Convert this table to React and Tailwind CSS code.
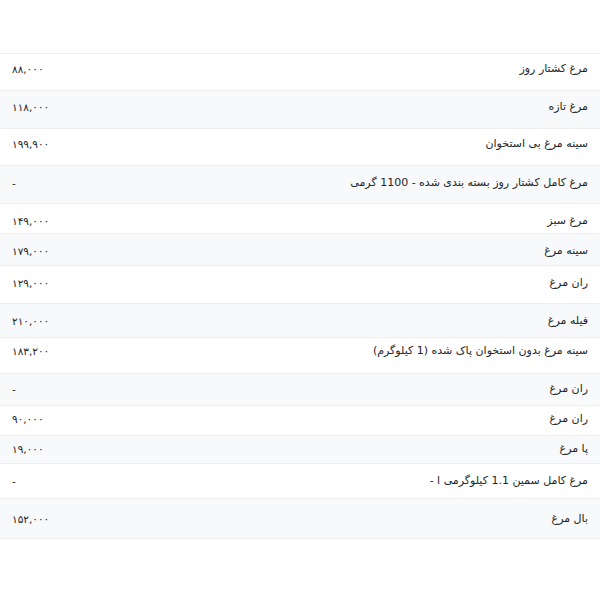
import React from "react";

const rows = [
  { name: "مرغ کشتار روز", price: "۸۸,۰۰۰", h: "h-[37px]", pt: "pt-[7px]" },
  { name: "مرغ تازه", price: "۱۱۸,۰۰۰", h: "h-[38px]", pt: "pt-[8px]" },
  { name: "سینه مرغ بی استخوان", price: "۱۹۹,۹۰۰", h: "h-[37px]", pt: "pt-[7px]" },
  { name: "مرغ کامل کشتار روز بسته بندی شده - 1100 گرمی", price: "-", h: "h-[38px]", pt: "pt-[9px]" },
  { name: "مرغ سبز", price: "۱۴۹,۰۰۰", h: "h-[30px]", pt: "pt-[9px]" },
  { name: "سینه مرغ", price: "۱۷۹,۰۰۰", h: "h-[32px]", pt: "pt-[9px]" },
  { name: "ران مرغ", price: "۱۲۹,۰۰۰", h: "h-[38px]", pt: "pt-[9px]" },
  { name: "فیله مرغ", price: "۲۱۰,۰۰۰", h: "h-[34px]", pt: "pt-[9px]" },
  { name: "سینه مرغ بدون استخوان پاک شده (1 کیلوگرم)", price: "۱۸۳,۲۰۰", h: "h-[36px]", pt: "pt-[5px]" },
  { name: "ران مرغ", price: "-", h: "h-[32px]", pt: "pt-[7px]" },
  { name: "ران مرغ", price: "۹۰,۰۰۰", h: "h-[30px]", pt: "pt-[5px]" },
  { name: "پا مرغ", price: "۱۹,۰۰۰", h: "h-[28px]", pt: "pt-[5px]" },
  { name: "مرغ کامل سمین 1.1 کیلوگرمی ا -", price: "-", h: "h-[35px]", pt: "pt-[9px]" },
  { name: "بال مرغ", price: "۱۵۲,۰۰۰", h: "h-[40px]", pt: "pt-[12px]" },
];

export default function App() {
  return (
    <div
      dir="rtl"
      className="w-[600px] h-[600px] bg-white text-[#212529] font-['DejaVu_Sans',sans-serif]"
    >
      <div className="h-[53px]" />
      <div className="border-t border-[#eeeeee]">
        {rows.map((row, i) => (
          <div
            key={i}
            className={`flex justify-between items-start border-b border-[#eeeeee] px-3 ${row.h} ${row.pt} ${
              i % 2 === 1 ? "bg-[#f8f9fa]" : "bg-white"
            }`}
          >
            <span className="text-[11px] leading-4">{row.name}</span>
            <span className="text-[10.5px] leading-4">{row.price}</span>
          </div>
        ))}
      </div>
    </div>
  );
}
